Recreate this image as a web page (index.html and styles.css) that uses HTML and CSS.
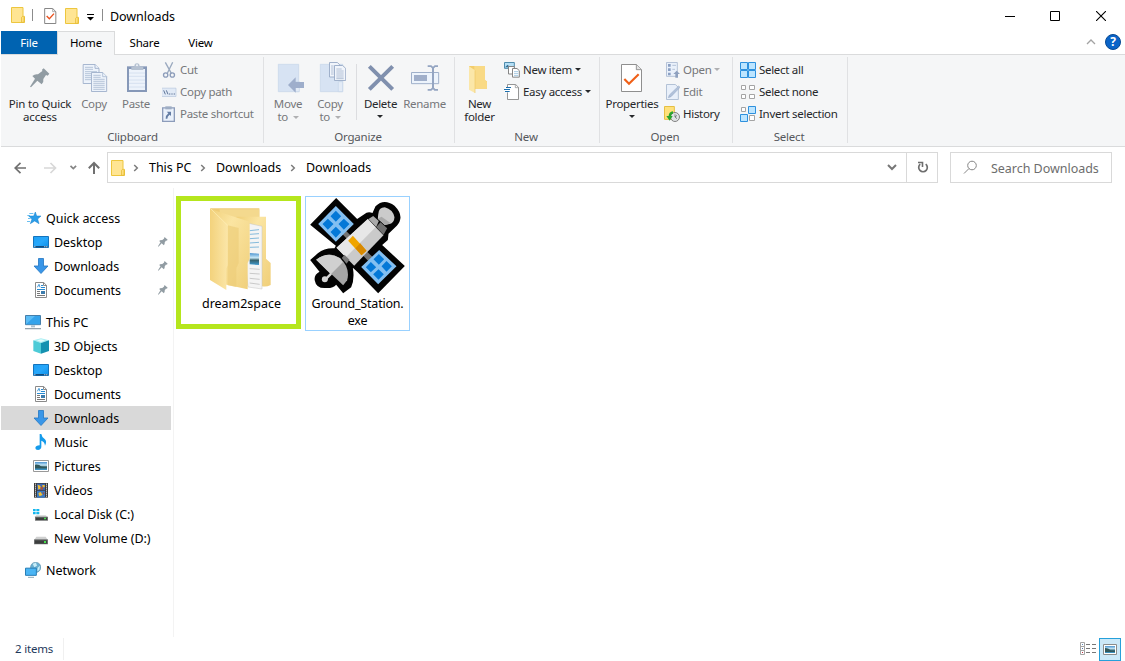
FILE: index.html
```html
<!DOCTYPE html>
<html lang="en">
<head>
<meta charset="utf-8">
<title>Downloads</title>
<link rel="stylesheet" href="styles.css">
</head>
<body>
<svg class="defs" width="0" height="0">
  <defs>
    <linearGradient id="fold" x1="0" x2="1"><stop offset="0" stop-color="#f3d27c"/><stop offset="1" stop-color="#fbe6a8"/></linearGradient>
    <linearGradient id="foldfront" x1="0" x2="1" y2="1"><stop offset="0" stop-color="#f0cf78"/><stop offset=".35" stop-color="#fbe5a2"/><stop offset="1" stop-color="#f0cf7a"/></linearGradient>
    <linearGradient id="blue" x1="0" x2="1" y2="1"><stop offset="0" stop-color="#1da0f5"/><stop offset=".5" stop-color="#28a8fb"/><stop offset="1" stop-color="#0c8fe8"/></linearGradient>
    <linearGradient id="pic" x2="0" y2="1"><stop offset="0" stop-color="#4b93cf"/><stop offset=".4" stop-color="#c8e8f7"/><stop offset=".6" stop-color="#35606a"/><stop offset="1" stop-color="#3e9ad0"/></linearGradient>
  </defs>
  <symbol id="i-folder" viewBox="0 0 42 48"><path d="M1.5 1.5H36V28H40.500V46.500H1.500Z" fill="#ffe593" stroke="#edc63e" stroke-width="3"/><path d="M31.500 46V31Q36 24 39 31V46Z" fill="#ffe07c" stroke="#e2b62f" stroke-width="2"/></symbol>
  <symbol id="i-pin" viewBox="0 0 60 60"><path d="M41 1L58 17L53 23L48 21L40 33Q42 42 35 49L22 38L3 58L0 56L15 32L7 24Q15 17 24 19L37 9L36 5Z" fill="#919ca3"/></symbol>
  <symbol id="i-desk" viewBox="99 102 48 48"><path d="M100.500 109.500H145.500V142.500H100.500Z" fill="url(#blue)" stroke="#1474bd" stroke-width="3"/><path d="M102 138.500H144V142H102Z" fill="#123c66"/><path d="M103 139h3v3h-3zM133 139h3v3h-3zM139 139h3v3h-3z" fill="#fff"/></symbol>
  <symbol id="i-down" viewBox="99 174 48 48"><path d="M115.500 175.500H130.500V198H144L123 220.500L102 198H115.500Z" fill="#3996e8" stroke="#2779c4" stroke-width="2.500"/></symbol>
  <symbol id="i-doc" viewBox="99 246 48 48"><path d="M106.500 247.500H131L139.500 256V292.500H106.500Z" fill="#fff" stroke="#8a8a8a" stroke-width="3"/><path d="M130.500 247V256.500H140" fill="none" stroke="#8a8a8a" stroke-width="3"/><path d="M112 262L117 253L120 262" fill="none" stroke="#288ad2" stroke-width="2.600"/><path d="M123 256.500h6M123 262.500h12M111 268.500h24" stroke="#288ad2" stroke-width="3"/><path d="M111 274.500h9M111 280.500h9M111 286.500h24" stroke="#777" stroke-width="3"/><path d="M123 273h12v9h-12z" fill="#3c7cad"/></symbol>
  <symbol id="i-drive" viewBox="99 165 48 48"><path d="M109 185H137L143 194H103Z" fill="#cfd0d0"/><rect x="102" y="193" width="42" height="15" rx="1" fill="#6e7070"/><rect x="105" y="196" width="36" height="10" fill="#3c3e3e"/><path d="M132 198h6v6h-6z" fill="#45e04b"/></symbol>
  <symbol id="i-crumb" viewBox="0 0 6 8"><path d="M1.200 1L4.300 4L1.200 7" fill="none" stroke="#7c7c7c" stroke-width="1.500"/></symbol>
</svg>

<div class="window">
  <header class="titlebar">
    <svg class="t-folder" width="14" height="16"><use href="#i-folder"/></svg>
    <i class="t-sep"></i>
    <svg class="t-check" width="13" height="16" viewBox="131 24 39 48"><path d="M133 25.500H157L166.500 35V70.500H133Z" fill="#fff" stroke="#747474" stroke-width="2.600"/><path d="M157 26V35H166" fill="none" stroke="#888" stroke-width="2"/><path d="M139 48L147 56L161 41" fill="none" stroke="#e9501d" stroke-width="4"/></svg>
    <svg class="t-folder2" width="14" height="16"><use href="#i-folder"/></svg>
    <svg class="t-menu" width="8" height="7" viewBox="0 0 8 7"><path d="M0 0h7v1H0zM0 3h7L3.500 6.500Z"/></svg>
    <i class="t-sep t-sep2"></i>
    <h1 class="title">Downloads</h1>
    <svg class="t-min" width="10" height="10" viewBox="0 0 10 10"><path d="M0 5h10v1H0z"/></svg>
    <svg class="t-max" width="10" height="10" viewBox="0 0 10 10"><path d="M.5 .5h9v9h-9z" fill="none" stroke="#000"/></svg>
    <svg class="t-close" width="10" height="10" viewBox="0 0 10 10"><path d="M0 0l10 10M10 0L0 10" stroke="#000" stroke-width="1.100"/></svg>
  </header>

  <nav class="tabs">
    <span class="tab file">File</span><span class="tab home">Home</span><span class="tab share">Share</span><span class="tab view">View</span>
    <svg class="collapse" width="10" height="6" viewBox="0 0 10 6"><path d="M1 5L5 1L9 5" fill="none" stroke="#a3a3a3" stroke-width="1.300"/></svg>
    <span class="help">?</span>
  </nav>

  <section class="ribbon">
    <div class="group clipboard">
      <div class="tools">
        <div class="big on pinbtn"><svg width="32" height="32" viewBox="72 186 96 96"><use href="#i-pin" x="90" y="204" width="60" height="60"/></svg><span>Pin to Quick<br>access</span></div>
        <div class="big copybtn"><svg width="32" height="32" viewBox="234 186 96 96"><g fill="#edf3fb" stroke="#9badc9" stroke-width="2.600"><path d="M249.500 193.500H285L297 205V250.500H249.500Z"/><path d="M285 194V205H297"/><path d="M255 202h24M255 208h24M255 215h36M255 221h18M255 227h18M255 233h18M255 239h18" stroke-width="2"/><path d="M274.500 217.500H308L320 229.500V274.500H274.500Z"/><path d="M308 218V230H320M280 226h22M280 232h22M280 238h34M280 244h34M280 250h34M280 256h34M280 262h34M280 268h34" stroke-width="2"/></g></svg><span>Copy</span></div>
        <div class="big pastebtn"><svg width="32" height="32" viewBox="360 186 96 96"><path d="M381 199H441V276H381Z" fill="#8698b8"/><path d="M387 207H435V270H387Z" fill="#edf3fb"/><path d="M387 219h48M387 229h48M387 240h48M387 250h48M387 261h48" stroke="#cad8eb" stroke-width="2"/><path d="M394 210V200H403Q403 190 411 190T419 200H430V210Z" fill="#b5c1d1"/><circle cx="411" cy="196" r="3" fill="#eef2f6"/></svg><span>Paste</span></div>
        <div class="smalls">
          <div class="small"><svg width="16" height="16" viewBox="486 186 48 48"><path d="M496 187L514 220M518 187L502 220" stroke="#9aa9bf" stroke-width="4"/><circle cx="497" cy="225" r="6.500" fill="none" stroke="#8c9cba" stroke-width="4"/><circle cx="517" cy="225" r="6.500" fill="none" stroke="#8c9cba" stroke-width="4"/></svg><span>Cut</span></div>
          <div class="small"><svg width="16" height="16" viewBox="486 252 48 48"><path d="M485 264.500H528V289.500H485Z" fill="#e1eaf6" stroke="#b7c6dc" stroke-width="2"/><path d="M491 271l5 12M499 271l5 12M507 282h4M514 282h4M521 282h4" stroke="#5f7598" stroke-width="3"/></svg><span>Copy path</span></div>
          <div class="small"><svg width="16" height="16" viewBox="486 318 48 48"><path d="M488 323.500H523V364.500H488Z" fill="#eaf1fb" stroke="#8c9cba" stroke-width="4"/><path d="M496 319H515V328H496Z" fill="#9eadc4"/><path d="M500 335H513V348L509 344Q502 349 502 356H497Q497 346 505 340Z" fill="#647da4"/></svg><span>Paste shortcut</span></div>
        </div>
      </div>
      <div class="caption">Clipboard</div>
    </div>

    <div class="group organize">
      <div class="tools">
        <div class="big movebtn"><svg width="32" height="32" viewBox="36 21 96 96"><path d="M55 28H116V110H55Z" fill="#d7e3f3" stroke="#c4d4e9" stroke-width="2"/><path d="M106 80h12v30h-12z" fill="#e3ebf6" stroke="#c4d4e9" stroke-width="2"/><path d="M84 90L107 67V81H132V99H107V113Z" fill="#9eaecb"/></svg><span>Move<br>to <b class="arr"></b></span></div>
        <div class="big copytobtn"><svg width="32" height="32" viewBox="162 21 96 96"><path d="M181 28H248V110H181Z" fill="#d7e3f3" stroke="#c4d4e9" stroke-width="2"/><path d="M235 80h13v30h-13z" fill="#e3ebf6" stroke="#c4d4e9" stroke-width="2"/><g fill="#f1f5fb" stroke="#94a7c4" stroke-width="2.600"><path d="M208.500 22.500H232L239 29V66H208.500Z"/><path d="M213 33h8M213 39h8M213 45h8M213 51h8M213 57h8" stroke-width="2"/><path d="M223.500 31.500H248L257 40V76.500H223.500Z"/><path d="M229 42h16M229 48h22M229 54h22M229 60h22M229 66h22M229 71h22" stroke-width="2"/></g></svg><span>Copy<br>to <b class="arr"></b></span></div>
        <i class="split"></i>
        <div class="big on deletebtn"><svg width="32" height="32" viewBox="316 21 96 96"><path d="M329 34L399 103M399 34L329 103" stroke="#8090ae" stroke-width="12"/></svg><span>Delete<br><b class="arr"></b></span></div>
        <div class="big renamebtn"><svg width="32" height="32" viewBox="447 21 96 96"><path d="M454.500 52.500H536V86H454.500Z" fill="#edf4fc" stroke="#9fb0ca" stroke-width="3"/><path d="M462 60h39v18h-39z" fill="#a0afca"/><path d="M503 31H514L519 35L524 31H534V36H526L522 40V98L526 102H534V107H523L519 103L514 107H503V102H512L516 98V40L512 36H503Z" fill="#94a5c2"/></svg><span>Rename</span></div>
      </div>
      <div class="caption">Organize</div>
    </div>

    <div class="group new">
      <div class="tools">
        <div class="big on newbtn"><svg width="32" height="32" viewBox="27 21 96 96"><path d="M42 33H89V76L96 79V101H50Z" fill="#f3cd6b"/><path d="M58 33H90V74L96 80V101H58Z" fill="#f9da86"/><path d="M42 34L60 46V114L42 104Z" fill="#fbe7a9"/><path d="M60 46V114" stroke="#efc765" stroke-width="2"/></svg><span>New<br>folder</span></div>
        <div class="smalls">
          <div class="small on"><svg width="16" height="16" viewBox="147 21 48 48"><path d="M148.500 22.500H178V40H148.500Z" fill="#b5dff6" stroke="#4f8cad" stroke-width="3"/><path d="M150 37l8-8 7 8z" fill="#376f93"/><path d="M160.500 34.500H178V57H160.500Z" fill="#fff" stroke="#858585" stroke-width="3"/><path d="M172.500 40.500H186L193 47V66.500H172.500Z" fill="#fff" stroke="#858585" stroke-width="3"/><path d="M177 50h13M177 56h13M177 62h13" stroke="#91bddb" stroke-width="2.500"/></svg><span>New item</span><b class="arr"></b></div>
          <div class="small on"><svg width="16" height="16" viewBox="147 87 48 48"><path d="M157.500 88.500H182L190.500 97V133.500H157.500Z" fill="#fff" stroke="#858585" stroke-width="2.600"/><path d="M181 89V98H190" fill="none" stroke="#858585" stroke-width="2"/><path d="M149 96h20v16h-20z" fill="#fff"/><path d="M153 97.500h15M147 103.500h18M150 109.500h14" stroke="#1c6fae" stroke-width="3"/></svg><span>Easy access</span><b class="arr"></b></div>
        </div>
      </div>
      <div class="caption">New</div>
    </div>

    <div class="group open">
      <div class="tools">
        <div class="big on propbtn"><svg width="32" height="32" viewBox="48 21 96 96"><path d="M64.500 28.500H109L124.500 44V109.500H64.500Z" fill="#fff" stroke="#868686" stroke-width="2.800"/><path d="M109 29V44H124" fill="#e4e4e4" stroke="#868686" stroke-width="2.500"/><path d="M73 72L87 86L116 58" fill="none" stroke="#f06018" stroke-width="6.500"/></svg><span>Properties<br><b class="arr"></b></span></div>
        <div class="smalls">
          <div class="small"><svg width="16" height="16" viewBox="192 21 48 48"><path d="M199.500 22.500H232V64H199.500Z" fill="#eaf1fb" stroke="#a9b9d1" stroke-width="2.500"/><path d="M204 27h8v8h-8zM204 40h8v8h-8zM204 53h8v8h-8z" fill="#8ba0c3"/><path d="M217 31h11M217 43h8" stroke="#a9b9d1" stroke-width="2.500"/><path d="M230 47L240 57H234V68H226V57H220Z" fill="#8fa1bf"/></svg><span>Open</span><b class="arr"></b></div>
          <div class="small"><svg width="16" height="16" viewBox="192 87 48 48"><path d="M199.500 88.500H226L235 97V133.500H199.500Z" fill="#e9f0fa" stroke="#a9b9d1" stroke-width="2.600"/><path d="M205 128L208 120L236 93L240 97L213 125Z" fill="#b2c2da" stroke="#91a5c3" stroke-width="1.500"/></svg><span>Edit</span></div>
          <div class="small on"><svg width="16" height="16" viewBox="192 153 48 48"><path d="M193.500 154.500H223V193H193.500Z" fill="#ffe17b" stroke="#e5bf43" stroke-width="3"/><circle cx="225" cy="186" r="13.500" fill="#dfe2e4" stroke="#828282" stroke-width="3"/><path d="M225 178V186L231 181M225 186l6 5" fill="none" stroke="#555" stroke-width="2"/><path d="M219 169Q206 171 206 183H199L209 197L218 183H213Q213 176 219 176Z" fill="#2aa52d"/></svg><span>History</span></div>
        </div>
      </div>
      <div class="caption">Open</div>
    </div>

    <div class="group select">
      <div class="tools">
        <div class="smalls">
          <div class="small on"><svg width="16" height="16" viewBox="420 21 48 48"><path d="M421.500 22.500h21v21h-21zM445.500 22.500h21v21h-21zM421.500 46.500h21v21h-21zM445.500 46.500h21v21h-21z" fill="#bde5ff" stroke="#2e91de" stroke-width="3"/></svg><span>Select all</span></div>
          <div class="small on"><svg width="16" height="16" viewBox="420 87 48 48"><path d="M424.500 91.500h12v12h-12zM448.500 91.500h15v12h-15zM424.500 118.500h12v12h-12zM448.500 118.500h15v12h-15z" fill="#fff" stroke="#a4a4a4" stroke-width="3"/></svg><span>Select none</span></div>
          <div class="small on"><svg width="16" height="16" viewBox="420 153 48 48"><path d="M445.500 154.500h21v21h-21zM421.500 178.500h21v21h-21z" fill="#bde5ff" stroke="#2e91de" stroke-width="3"/><path d="M424.500 157.500h12v12h-12zM448.500 181.500h15v15h-15z" fill="#fff" stroke="#a4a4a4" stroke-width="3"/></svg><span>Invert selection</span></div>
        </div>
      </div>
      <div class="caption">Select</div>
    </div>
  </section>

  <div class="navbar">
    <svg class="arrows" width="93" height="16" viewBox="0 0 93 16" fill="none" stroke-width="1.700"><path d="M1 8H12M6.500 2.800L1.200 8L6.500 13.200" stroke="#707070"/><path d="M30 8H41.500M36.500 3L41.500 8L36.500 13" stroke="#d8d8d8"/><path d="M56.500 5.800L59.300 8.600L62.100 5.800" stroke="#858585"/><path d="M80 14V3M74.800 8.300L80 3L85.200 8.300" stroke="#707070" stroke-width="2"/></svg>
    <div class="address">
      <svg class="a-folder" width="14" height="16"><use href="#i-folder"/></svg>
      <svg class="crumb c1" width="6" height="8"><use href="#i-crumb"/></svg>
      <span class="w-pc">This PC</span>
      <svg class="crumb" width="6" height="8"><use href="#i-crumb"/></svg>
      <span class="w-dl">Downloads</span>
      <svg class="crumb" width="6" height="8"><use href="#i-crumb"/></svg>
      <span>Downloads</span>
      <svg class="a-chev" width="10" height="7" viewBox="0 0 10 7"><path d="M1 1L5 5L9 1" fill="none" stroke="#777" stroke-width="2"/></svg>
      <div class="refresh"><svg width="12" height="13" viewBox="0 0 12 13"><path d="M8.700 3.100A4.300 4.300 0 1 1 3.200 3.200" fill="none" stroke="#6e6e6e" stroke-width="1.700"/><path d="M1 1.500H5.500V6" fill="none" stroke="#6e6e6e" stroke-width="1.600"/></svg></div>
    </div>
    <div class="search"><svg width="15" height="15" viewBox="0 0 15 15" fill="none" stroke="#858585"><circle cx="9" cy="5.500" r="4.300"/><path d="M6 8.500L1 13.500"/></svg><span>Search Downloads</span></div>
  </div>

  <main class="body">
    <aside class="tree">
      <div class="row"><svg width="16" height="16" viewBox="75 30 48 48"><path d="M106 36L110 48L123 48L113 57L117 71L104 63L91 71L96 57L86 48L101 48Z" fill="#2b9de8" stroke="#1781ce" stroke-width="1.500"/><path d="M88 40.500H100M82 46.500H90M84 55.500H92M81 64.500H90" stroke="#4ab2ee" stroke-width="2.500"/></svg>Quick access</div>
      <div class="row sub"><svg width="16" height="16"><use href="#i-desk"/></svg>Desktop<svg class="pin" width="10" height="10"><use href="#i-pin"/></svg></div>
      <div class="row sub"><svg width="16" height="16"><use href="#i-down"/></svg>Downloads<svg class="pin" width="10" height="10"><use href="#i-pin"/></svg></div>
      <div class="row sub"><svg width="16" height="16"><use href="#i-doc"/></svg>Documents<svg class="pin" width="10" height="10"><use href="#i-pin"/></svg></div>
      <div class="row head"><svg width="16" height="16" viewBox="75 342 48 48"><path d="M76.500 346.500H121.500V374H76.500Z" fill="#5bbcf5" stroke="#457eaa" stroke-width="3"/><path d="M78 373L105 348H120V373Z" fill="#34a3eb"/><path d="M93 376h12v6h-12z" fill="#adc1ce"/><path d="M75 386h48" stroke="#8b9ba6" stroke-width="3.500"/></svg>This PC</div>
      <div class="row sub"><svg width="16" height="16" viewBox="99 414 48 48"><path d="M100 421L123 415L147 421L123 429Z" fill="#a9eef3"/><path d="M100 421L123 429V461L100 453Z" fill="#4dcbd7"/><path d="M147 421L123 429V461L147 453Z" fill="#1591b0"/><path d="M111 421L123 418L135 421L123 426Z" fill="#e4fbfb"/></svg>3D Objects</div>
      <div class="row sub"><svg width="16" height="16"><use href="#i-desk"/></svg>Desktop</div>
      <div class="row sub"><svg width="16" height="16"><use href="#i-doc"/></svg>Documents</div>
      <div class="row sub selected"><svg width="16" height="16"><use href="#i-down"/></svg>Downloads</div>
      <div class="row sub"><svg width="16" height="16" viewBox="99 237 48 48"><path d="M119 237H124Q125 246 134 252Q142 259 135 272Q134 260 124 257V276Q123 284 114 285Q106 285 106 279Q107 271 119 271Z" fill="#159beb"/></svg>Music</div>
      <div class="row sub"><svg width="16" height="16" viewBox="99 309 48 48"><path d="M100.500 316.500H145.500V349.500H100.500Z" fill="#fff" stroke="#999" stroke-width="3"/><path d="M105 321h36v24h-36z" fill="url(#pic)"/><path d="M105 329Q115 326 125 335L141 337V340H105Z" fill="#31585a"/></svg>Pictures</div>
      <div class="row sub"><svg width="16" height="16" viewBox="99 21 48 48"><path d="M102 24h42v44h-42z" fill="#3b3b3b"/><path d="M111 26h24v20h-24z" fill="#3c67b4"/><path d="M111 48h24v20h-24z" fill="#3979c3"/><path d="M113 29l8 3 2 8-8 4zM127 30h7v7h-7zM115 54l7-3 6 9-10 4z" fill="#f2bf33"/><path d="M121 37l7-3 2 9-8 3zM127 51l7 2-3 8z" fill="#a3553f"/><path d="M106.500 26v41M139.500 26v41" stroke="#fff" stroke-width="3" stroke-dasharray="3 3"/></svg>Videos</div>
      <div class="row sub"><svg width="16" height="16" viewBox="99 93 48 48"><path d="M99 102h8v7h-8zM109 102h9v7h-9zM99 111h8v7h-8zM109 111h9v7h-9z" fill="#14b7ee"/><path d="M109 121H137L143 126H103Z" fill="#cfd0d0"/><rect x="105" y="125" width="39" height="12" rx="1" fill="#6e7070"/><path d="M108 128h33v7h-33z" fill="#3c3e3e"/><path d="M132 128h6v5h-6z" fill="#45e04b"/></svg>Local Disk (C:)</div>
      <div class="row sub"><svg width="16" height="16"><use href="#i-drive"/></svg>New Volume (D:)</div>
      <div class="row head"><svg width="16" height="16" viewBox="75 261 48 48"><circle cx="107" cy="277" r="15.500" fill="#6aaecf" stroke="#477f9b" stroke-width="1.500"/><path d="M98 266l10-3 3 9-8 5zM113 278l7-6-2 13-6 4z" fill="#c9edf7"/><path d="M76.500 279.500H109V301H76.500Z" fill="#4ab5f4" stroke="#287eb6" stroke-width="3"/><path d="M84 307h18" stroke="#91acba" stroke-width="3"/></svg>Network</div>
    </aside>

    <section class="files">
      <div class="item folder">
        <svg width="63" height="84" viewBox="121 50 189 252"><path d="M122 54H269V240H150Z" fill="#efcc76"/><path d="M150 57H269V92H150Z" fill="#f4d98e"/><path d="M200 79H289V205L303 218V284Q287 292 274 286H200Z" fill="url(#foldfront)"/><path d="M215 94L277 108V296L235 290Z" fill="#f4f4f4" stroke="#c5c5c5" stroke-width="1.500"/><path d="M240 121l28-3M240 132l28-2M240 145l28-2M240 158l28-2M240 171l28-1" stroke="#5ba5d2" stroke-width="2.200"/><path d="M240 188L268 190V224L240 222Z" fill="url(#pic)"/><path d="M240 235l30 2M240 249l30 2M240 264l30 3M240 278l30 4" stroke="#b4b4b4" stroke-width="2"/><path d="M122 54L140 62L240 94V205L234 218V297L150 279Z" fill="url(#foldfront)"/><path d="M174 105L207 113V218L200 234V290L174 285Z" fill="#edcd78" opacity=".65"/><path d="M121 54L174 105V225L170 235V299L121 269Z" fill="url(#fold)"/><path d="M122 54L174 105" stroke="#fff0b9" stroke-width="2"/></svg>
        <span>dream2space</span>
      </div>
      <div class="item app">
        <svg width="96" height="96" viewBox="14.500 10 288 288">
          <path d="M93 10L156 73L184 54Q193 51 202 55L211 35Q236 10 268 33Q300 65 275 93L250 117L248 136L231 151L299 214L219 296L157 232L143 219Q149 253 138 278L114 296L93 270Q83 282 60 280Q33 281 29 258Q25 241 43 231L15 196L38 176Q59 159 88 161L92 153L15 90Z" fill="#030303"/>
          <path d="M112 119L123 109L203 188L190 200Z" fill="#737373"/>
          <path d="M92 34L146 88L92 141L39 88ZM222 166L274 215L219 269L168 217Z" fill="#83bff1"/>
          <g fill="#0478d7"><path d="M92 48L108 65L92 81L76 65ZM68 72L85 88L68 105L52 88ZM116 72L133 88L116 105L100 88ZM92 96L108 112L92 129L76 112Z"/><path d="M221 178L237 194L221 210L205 194ZM197 202L213 218L197 233L182 218ZM244 199L260 215L244 231L229 215ZM220 224L236 239L220 255L204 239Z"/></g>
          <path d="M188 73L235 122L147 213L94 159Z" fill="#cacaca"/><path d="M188 73L211 98L122 188L94 159Z" fill="#e7e7e7"/>
          <path d="M143 123L184 168L169 182L129 138Z" fill="#f0a500"/><path d="M165 146L184 168L169 182L151 161Z" fill="#d88900"/>
          <path d="M190 73L204 64L221 79L213 97Z" fill="#a9a9a9"/><path d="M213 97L226 83L246 101L235 120Z" fill="#717171"/>
          <path d="M219 60Q220 38 239 38Q263 44 268 68Q267 85 253 88L239 91L218 72Z" fill="#cbcbcb"/><path d="M218 72L229 66L257 86L239 91Z" fill="#a8a8a8"/>
          <path d="M33 195Q69 169 104 190Q136 219 126 257L114 272Z" fill="#a5a5a5"/><path d="M33 195Q69 168 105 191L113 203L77 239Z" fill="#d0d0d0"/>
          <path d="M78 237L64 251" stroke="#d5d5d5" stroke-width="7"/><circle cx="59" cy="254" r="9" fill="#d5d5d5"/><path d="M110 190l8-10 15 15-9 12z" fill="#777"/>
        </svg>
        <span>Ground_Station.<br>exe</span>
      </div>
    </section>
  </main>

  <footer class="status">
    <span class="count">2 items</span>
    <svg class="details" width="16" height="14" viewBox="57 32 48 42"><path d="M58.500 33.500h12v12h-12zM58.500 45.500h12v12h-12zM58.500 57.500h12v12h-12z" fill="#fff" stroke="#a4a4a4" stroke-width="3"/><path d="M63 38h3v3h-3z" fill="#5b89bc"/><path d="M63 50h3v3h-3z" fill="#5577aa"/><path d="M63 62h3v3h-3z" fill="#c02e3f"/><path d="M75 39.500h12M93 39.500h12M75 51.500h12M93 51.500h12M75 63.500h12M93 63.500h12" stroke="#777" stroke-width="3"/></svg>
    <div class="thumb"><svg width="14" height="11" viewBox="0 0 14 11"><path d="M.5 .5h13v10H.5z" fill="#fff" stroke="#8b8b8b"/><path d="M2 2h10v7H2z" fill="url(#pic)"/><path d="M2 4q4 0 6 3h4v1H2z" fill="#33585c"/></svg></div>
  </footer>
</div>
</body>
</html>
```
FILE: styles.css
```css
* { box-sizing: border-box; }
body { margin: 0; background: #fff; font-family: "Noto Sans", "Open Sans", sans-serif; color: #000; }
svg { display: block; flex: none; }
.defs { position: absolute; }
.window { width: 1125px; height: 661px; display: flex; flex-direction: column; overflow: hidden; padding-left: 1px; white-space: nowrap; }

.titlebar { height: 31px; display: flex; align-items: center; flex: none; }
.t-folder { margin-left: 10px; margin-top: -1px; }
.t-sep { width: 1px; height: 12px; background: #8c8c8c; margin: -1px 11px 0 7px; flex: none; }
.t-check { margin-top: 1px; }
.t-folder2 { margin-left: 8px; margin-top: 1px; }
.t-menu { margin-left: 8px; margin-top: 3px; }
.t-sep2 { margin: -1px 7px 0 7px; }
.title { margin: 0; font-size: 12.5px; font-weight: 400; line-height: 31px; padding-top: 1px; letter-spacing: -.05px; }
.t-min { margin-left: auto; }
.t-max { margin-left: 35px; }
.t-close { margin: 0 19px 0 36px; }

.tabs { height: 24px; display: flex; flex: none; border-bottom: 1px solid #dadbdc; font-size: 11.500px; letter-spacing: -.2px; line-height: 24px; align-items: flex-start; }
.tab { text-align: center; height: 23px; }
.file { width: 56px; background: #0063b1; color: #fff; }
.home { width: 58px; height: 24px; background: #f5f6f7; border: 1px solid #dadbdc; border-bottom: 0; line-height: 22px; }
.share { width: 59px; }
.view { width: 53px; }
.collapse { margin: 8px 9px 0 auto; }
.help { width: 16px; height: 16px; margin: 3px 4px 0 0; border-radius: 50%; background: #0a64c8; border: 1px solid #084a94; color: #fff; font-weight: 700; font-size: 12px; line-height: 14px; text-align: center; }

.ribbon { height: 92px; flex: none; display: flex; background: #f5f6f7; border-bottom: 1px solid #dadbdc; font-size: 11.500px; letter-spacing: -.3px; color: #75777a; }
.group { position: relative; display: flex; flex-direction: column; height: 91px; }
.group::after { content: ""; position: absolute; right: 0; top: 2px; bottom: 3px; width: 1px; background: #e0e1e3; }
.clipboard { width: 263px; }
.organize { width: 191px; }
.new { width: 145px; }
.open { width: 133px; }
.select { width: 115px; }
.tools { height: 74px; display: flex; }
.caption { line-height: 16px; text-align: center; color: #55585c; padding-right: 3px; letter-spacing: -.2px; }
.clipboard .caption { padding-right: 0; }
.big { display: flex; flex-direction: column; align-items: center; padding-top: 7px; gap: 3px; line-height: 13px; text-align: center; flex: none; }
.on { color: #26282b; }
.arr { display: inline-block; border: 3px solid transparent; border-top-color: currentColor; border-bottom: 0; vertical-align: 2px; margin-left: 2px; }
.big:not(.on) .arr, .small:not(.on) .arr { opacity: .55; }
.deletebtn .arr, .propbtn .arr { margin: 0; vertical-align: 3px; }
.pinbtn { width: 78px; letter-spacing: -.2px; }
.copybtn { width: 30px; }
.pastebtn { width: 54px; }
.smalls { padding-top: 4px; }
.small { height: 22px; display: flex; align-items: center; gap: 2px; }
.small span { line-height: 16px; padding-bottom: 1px; }
.small .arr { margin: -1px 0 0 0; }
.clipboard .smalls { margin-left: -1px; }
.movebtn { width: 48px; }
.copytobtn { width: 36px; }
.split { width: 1px; height: 56px; background: #dcdde0; margin: 9px 0 0 8px; }
.deletebtn { width: 47px; }
.renamebtn { width: 41px; }
.newbtn { width: 49px; }
.new .small, .select .small { gap: 3px; }
.propbtn { width: 64px; }
.open .small { gap: 3px; }
.select .smalls { padding-left: 7px; }

.navbar { height: 41px; flex: none; display: flex; align-items: center; font-size: 12.500px; letter-spacing: -.03px; }
.arrows { margin-left: 13px; }
.address { width: 831px; height: 31px; border: 1px solid #d9d9d9; display: flex; align-items: center; padding-left: 3px; }
.c1 { margin: 0 10px 0 8px; }
.crumb { margin-right: 10px; }
.w-pc { width: 51px; }
.w-dl { width: 74px; }
.a-chev { margin-left: auto; margin-right: 9px; }
.refresh { width: 31px; height: 29px; border-left: 1px solid #d9d9d9; display: flex; align-items: center; justify-content: center; padding-left: 1px; }
.search { width: 162px; height: 31px; border: 1px solid #d9d9d9; margin-left: 12px; display: flex; align-items: center; padding-left: 12px; color: #6d6d6d; }
.search span { margin-left: 13px; padding-top: 1px; }

.body { display: flex; height: 449px; flex: none; font-size: 12.500px; letter-spacing: -.04px; }
.tree { width: 173px; height: 449px; border-right: 1px solid #f3f3f3; padding-top: 18px; flex: none; }
.row { height: 24px; display: flex; align-items: center; gap: 5px; padding-left: 24px; width: 170px; }
.sub { padding-left: 32px; }
.head { margin-top: 8px; }
.selected { background: #d9d9d9; }
.pin { margin-left: auto; margin-right: 3px; }
.files { display: flex; align-items: flex-start; padding: 8px 0 0 2px; gap: 4px; }
.item { display: flex; flex-direction: column; align-items: center; text-align: center; line-height: 17px; }
.folder { width: 125px; height: 133px; border: 5px solid #b5e61d; padding: 6px 0 0 6px; gap: 4px; }
.app { width: 105px; height: 135px; border: 1px solid #99d1ff; padding-top: 1px; gap: 1px; letter-spacing: -.2px; }

.status { height: 24px; display: flex; align-items: center; font-size: 11.500px; color: #1e395b; flex: none; }
.count { padding-left: 14px; width: 63px; border-right: 1px solid #f0f0f0; line-height: 22px; letter-spacing: -.2px; }
.details { margin-left: auto; }
.thumb { width: 22px; height: 23px; background: #cce8f8; border: 1px solid #26a0da; margin: 0 4px 0 3px; display: flex; align-items: center; justify-content: center; }
```
